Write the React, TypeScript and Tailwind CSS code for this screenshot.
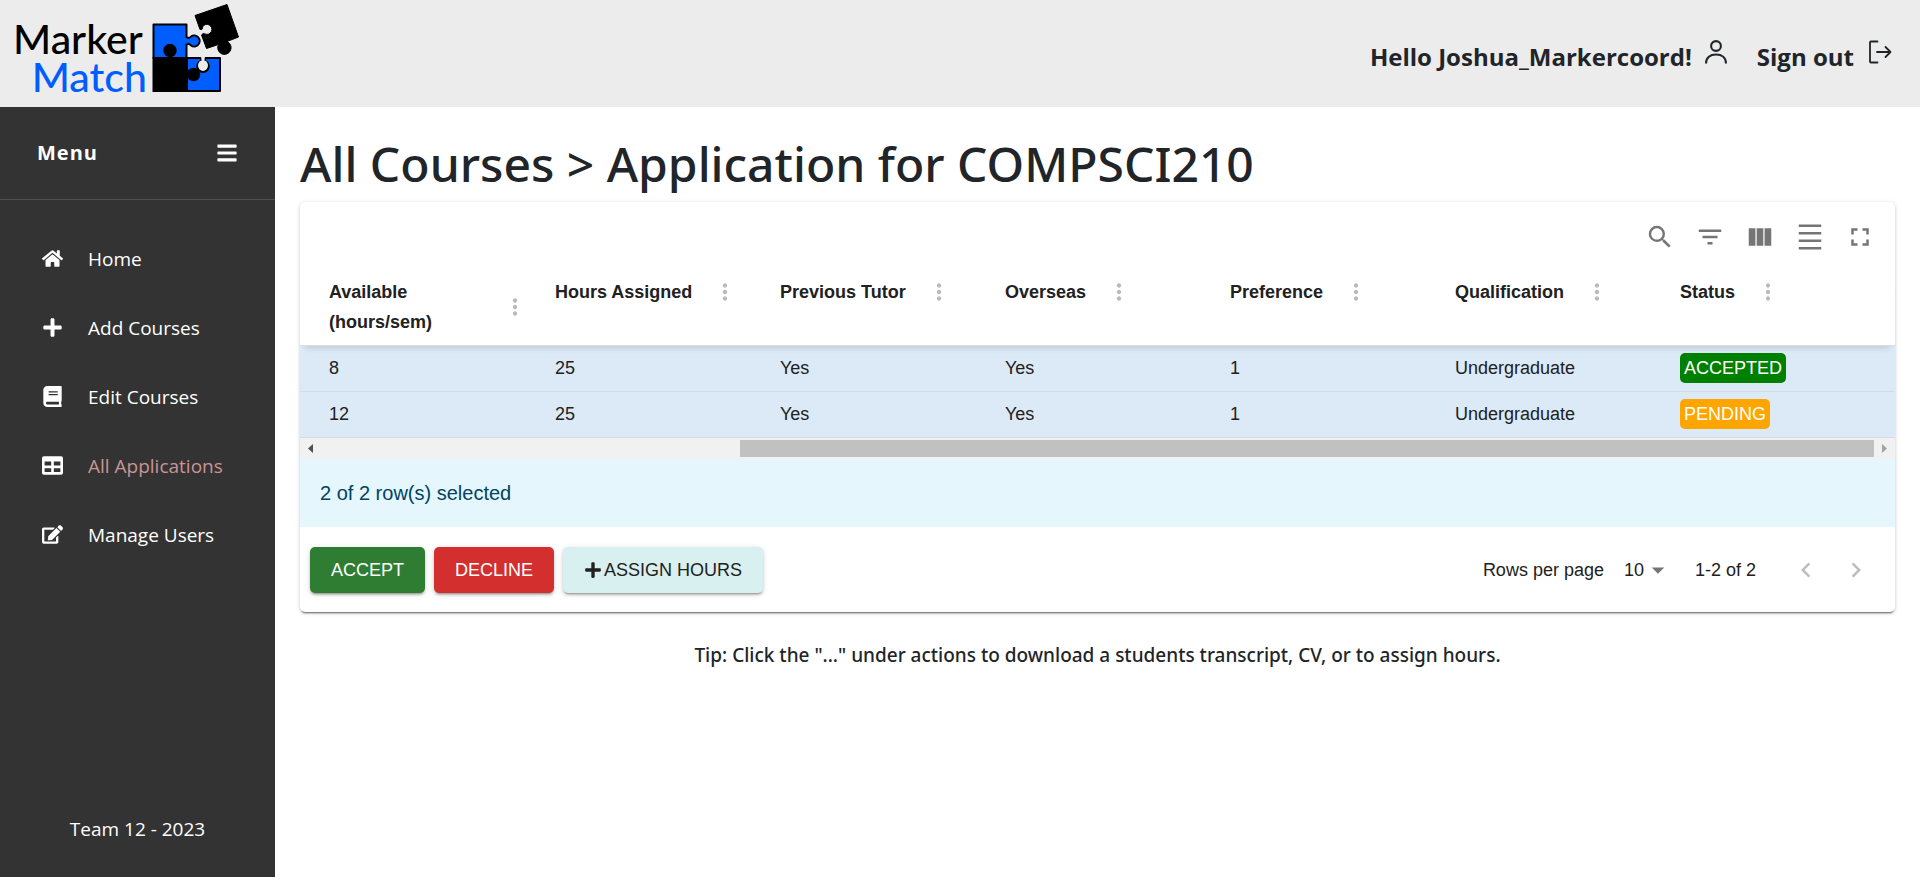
import React from "react";
import { FaHome, FaPlus, FaBook, FaTable, FaEdit, FaBars } from "react-icons/fa";
import {
  MdSearch,
  MdFilterList,
  MdDensitySmall,
  MdFullscreen,
  MdMoreVert,
  MdChevronLeft,
  MdChevronRight,
  MdArrowDropDown,
} from "react-icons/md";

const SANS = "font-['Open_Sans','Noto_Sans',sans-serif]";
const ARIAL = "font-['Liberation_Sans',Arial,sans-serif]";

function Logo() {
  return (
    <a href="#home" className="flex items-start gap-1 pl-[13px] font-['Lato',sans-serif] text-[41px] leading-[38px] font-medium">
      <span className="flex flex-col items-end pt-5">
        <span className="pr-1 text-black">Marker</span>
        <span className="text-[#005eff]">Match</span>
      </span>
      <svg width="90" height="94" viewBox="150 0 90 94" aria-hidden="true">
        <path
          d="M152.500 24.500H185.500V37Q188 39 190 36.500A5.500 5.500 0 1 1 190 45.500Q188 43 185.500 44.500V58H152.500Z"
          fill="#005eff" stroke="#000" strokeWidth="2" strokeLinejoin="round"
        />
        <path
          d="M186 58H199.500Q201 61 198 62A5.800 5.800 0 1 0 206 62Q203 61 204.500 58H219V91H186Z"
          fill="#005eff" stroke="#000" strokeWidth="2" strokeLinejoin="round"
        />
        <path d="M200.500 56H203.500V60H200.500Z" fill="#ececec" />
        <circle cx="202" cy="65" r="4.800" fill="#ececec" />
        <rect x="151.500" y="57" width="35" height="35" />
        <circle cx="169" cy="50.500" r="6.700" />
        <circle cx="192.500" cy="74.500" r="6.700" />
        <path
          d="M194 15.500L226 4.500L237.500 37L226 41.500A6.700 6.700 0 1 1 217.500 44.500L205.500 48.500L200.500 35Q202 32.500 204 34A5 5 0 1 0 201.500 27Q202 30 199 29.500Z"
          stroke="#000" strokeWidth="1" strokeLinejoin="round"
        />
      </svg>
    </a>
  );
}

function PersonIcon() {
  return (
    <svg width="24" height="24" viewBox="0 0 24 24" fill="none" stroke="currentColor" strokeWidth="2.1" aria-hidden="true">
      <circle cx="12" cy="6" r="4.900" />
      <path d="M2 23.500C2 17.500 6.200 14.500 12 14.500S22 17.500 22 23.500" />
    </svg>
  );
}

function ExitIcon() {
  return (
    <svg width="24" height="24" viewBox="0 0 24 24" fill="none" stroke="currentColor" strokeWidth="1.8" strokeLinecap="round" strokeLinejoin="round" aria-hidden="true">
      <path d="M9.500 1.500H3Q2 1.500 2 2.500V21.500Q2 22.500 3 22.500H9.500M9 12H22M17.500 7L22.500 12L17.500 17" />
    </svg>
  );
}

function ColumnsIcon() {
  return (
    <svg width="30" height="30" viewBox="0 0 24 24" fill="currentColor" aria-hidden="true">
      <path d="M14.670 5v14H9.330V5h5.340zm1 14H21V5h-5.330v14zm-7.340 0V5H3v14h5.330z" />
    </svg>
  );
}

const menu = [
  { label: "Home", icon: FaHome },
  { label: "Add Courses", icon: FaPlus },
  { label: "Edit Courses", icon: FaBook },
  { label: "All Applications", icon: FaTable, active: true },
  { label: "Manage Users", icon: FaEdit },
];

const columns = [
  "Available (hours/sem)",
  "Hours Assigned",
  "Previous Tutor",
  "Overseas",
  "Preference",
  "Qualification",
  "Status",
];

const rows = [
  { cells: ["8", "25", "Yes", "Yes", "1", "Undergraduate"], status: "ACCEPTED" },
  { cells: ["12", "25", "Yes", "Yes", "1", "Undergraduate"], status: "PENDING" },
];

const tools = [
  { label: "Show/Hide search", icon: <MdSearch size={30} /> },
  { label: "Show/Hide filters", icon: <MdFilterList size={30} /> },
  { label: "Show/Hide columns", icon: <ColumnsIcon /> },
  { label: "Toggle density", icon: <MdDensitySmall size={30} /> },
  { label: "Toggle full screen", icon: <MdFullscreen size={30} /> },
];

function Sidebar() {
  return (
    <aside className="flex w-[275px] shrink-0 flex-col bg-[#333333] text-white">
      <div className="flex h-[93px] items-center justify-between border-b border-[#4f4f4f] px-[37px]">
        <span className="text-xl font-bold tracking-wider">Menu</span>
        <button type="button" aria-label="Toggle menu">
          <FaBars className="h-[22px] w-auto" />
        </button>
      </div>
      <nav className="mt-[25px] flex flex-col">
        {menu.map(({ label, icon: Icon, active }) => (
          <a key={label} href="#" className="flex h-[69px] items-center pl-[42px] text-[19px]">
            <span className="flex w-[46px] pb-[3px]">
              <Icon className="h-[21px] w-auto" />
            </span>
            <span className={active ? "text-[#c99595]" : ""}>{label}</span>
          </a>
        ))}
      </nav>
      <p className="mt-auto pb-[34px] text-center text-[19px] leading-7">Team 12 - 2023</p>
    </aside>
  );
}

function CourseTable() {
  return (
    <table className="w-full table-fixed border-collapse text-left text-lg">
      <thead className="relative shadow-[0_7px_6px_-5px_rgba(0,0,0,0.14)]">
        <tr className="border-b border-[#dadcde]">
          {columns.map((name, i) => (
            <th
              key={name}
              scope="col"
              className={
                i === 0
                  ? "w-[235px] pb-2 pl-[29px] align-top"
                  : i === columns.length - 1
                    ? "w-[235px] pb-2 pl-5 align-top"
                    : "pb-2 pl-5 align-top"
              }
            >
              <div className={i === 0 ? "flex items-center justify-between pr-[7px]" : "flex items-center gap-5"}>
                <span className={i === 0 ? "w-[120px] leading-[30px]" : "leading-[30px] whitespace-nowrap"}>{name}</span>
                <button type="button" aria-label="Column actions" className="text-[#bababa]">
                  <MdMoreVert size={26} />
                </button>
              </div>
            </th>
          ))}
        </tr>
      </thead>
      <tbody>
        {rows.map((row) => (
          <tr key={row.status} className="h-[46px] border-b border-[#d8dce0] bg-[#dce9f6]">
            {row.cells.map((c, i) => (
              <td key={i} className={i === 0 ? "pb-0.5 pl-[29px]" : "pb-0.5 pl-5"}>
                {c}
              </td>
            ))}
            <td className="pb-0.5 pl-5">
              <span
                className={
                  row.status === "ACCEPTED"
                    ? "inline-block rounded-[5px] bg-[#008000] px-1 leading-[30px] text-white"
                    : "inline-block rounded-[5px] bg-[#ffa500] px-1 leading-[30px] text-white"
                }
              >
                {row.status}
              </span>
            </td>
          </tr>
        ))}
      </tbody>
    </table>
  );
}

function ScrollTrack() {
  return (
    <div className="flex h-[21px] items-center bg-[#f1f1f1]">
      <span className="flex w-[21px] justify-center text-[#505050]">
        <svg width="5" height="9" viewBox="0 0 5 9" fill="currentColor" aria-hidden="true"><path d="M5 0V9L0 4.500Z" /></svg>
      </span>
      <div className="flex flex-1 justify-end">
        <div className="h-[17px] w-[73%] bg-[#c1c1c1]" />
      </div>
      <span className="flex w-[21px] justify-center text-[#a3a3a3]">
        <svg width="5" height="9" viewBox="0 0 5 9" fill="currentColor" aria-hidden="true"><path d="M0 0V9L5 4.500Z" /></svg>
      </span>
    </div>
  );
}

const BTN =
  "flex h-[46px] items-center gap-[2px] rounded-[5px] px-[21px] text-lg shadow-[0_3px_2px_-2px_rgba(0,0,0,0.25),0_2px_3px_rgba(0,0,0,0.16),0_1px_6px_rgba(0,0,0,0.12)]";

export default function App() {
  return (
    <div className={`flex min-h-screen flex-col bg-white text-[#212529] ${SANS}`}>
      <header className="flex h-[107px] items-start justify-between bg-[#ececec]">
        <Logo />
        <div className="flex items-center pt-10 pr-7 text-2xl font-bold">
          <span>Hello Joshua_Markercoord!</span>
          <a href="#profile" aria-label="Profile" className="mb-[10px] ml-3">
            <PersonIcon />
          </a>
          <a href="#signout" className="ml-[29px] flex items-center gap-[14px]">
            <span>Sign out</span>
            <span className="mb-[10px]">
              <ExitIcon />
            </span>
          </a>
        </div>
      </header>

      <div className="flex flex-1">
        <Sidebar />
        <main className="flex min-w-0 flex-1 flex-col px-[25px] pt-[27px]">
          <h1 className="mb-2 font-['Noto_Sans','Open_Sans',sans-serif] text-5xl leading-[60px] font-medium">
            All Courses &gt; Application for COMPSCI210
          </h1>

          <section
            className={`rounded-[5px] text-[#212121] shadow-[0_3px_2px_-2px_rgba(0,0,0,0.5),0_1px_2px_rgba(0,0,0,0.14),0_1px_5px_rgba(0,0,0,0.14)] ${ARIAL}`}
          >
            <div className="flex h-[75px] items-start justify-end pt-[10px] pr-[10px] text-[#757575]">
              {tools.map((t) => (
                <button key={t.label} type="button" aria-label={t.label} className="flex size-[50px] items-center justify-center">
                  {t.icon}
                </button>
              ))}
            </div>
            <CourseTable />
            <ScrollTrack />
            <div className="flex h-[68px] items-center bg-[#e5f6fd] px-5 text-xl text-[#014361]">2 of 2 row(s) selected</div>
            <div className="flex h-[85px] items-center justify-between pr-[14px] pl-[10px]">
              <div className="flex gap-[9px]">
                <button type="button" className={`${BTN} bg-[#2e7d32] text-white`}>ACCEPT</button>
                <button type="button" className={`${BTN} bg-[#d32f2f] text-white`}>DECLINE</button>
                <button type="button" className={`${BTN} bg-[#d9f0f0] text-[#212121]`}>
                  <FaPlus size={18} />
                  ASSIGN HOURS
                </button>
              </div>
              <div className="flex items-center text-lg">
                <label htmlFor="page-size">Rows per page</label>
                <div className="relative ml-5 flex items-center">
                  <select id="page-size" defaultValue="10" className="w-[44px] appearance-none bg-transparent">
                    <option>10</option>
                  </select>
                  <MdArrowDropDown size={30} className="pointer-events-none absolute left-[19px] text-[#757575]" />
                </div>
                <span className="ml-[27px]">1-2 of 2</span>
                <div className="ml-[25px] flex text-[#bdbdbd]">
                  <button type="button" aria-label="Previous page" className="flex size-[50px] items-center justify-center">
                    <MdChevronLeft size={30} />
                  </button>
                  <button type="button" aria-label="Next page" className="flex size-[50px] items-center justify-center">
                    <MdChevronRight size={30} />
                  </button>
                </div>
              </div>
            </div>
          </section>

          <p className="mt-[28px] text-center font-['Noto_Sans','Open_Sans',sans-serif] text-[19px] leading-[30px] font-medium">
            Tip: Click the "..." under actions to download a students transcript, CV, or to assign hours.
          </p>
        </main>
      </div>
    </div>
  );
}
